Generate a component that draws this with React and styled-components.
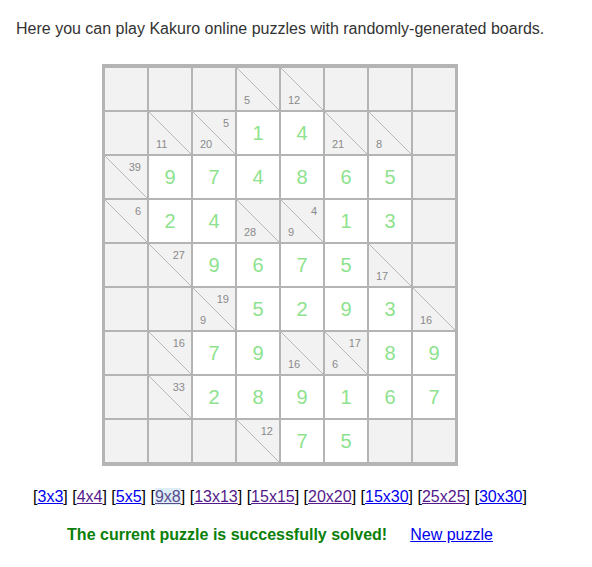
import styled, { createGlobalStyle } from 'styled-components';

const GlobalStyle = createGlobalStyle`
  body {
    margin: 8px;
    background: #fff;
    font-family: "Liberation Sans", Arial, sans-serif;
  }
`;

const Page = styled.div`
  width: 544px;
  padding: 0 8px;
  box-sizing: border-box;
`;

const Intro = styled.p`
  margin: 12px 0 0;
  font-size: 16px;
  line-height: 18px;
  color: #333;
  white-space: nowrap;
`;

const Board = styled.div`
  display: grid;
  grid-template-columns: repeat(8, 42px);
  grid-auto-rows: 42px;
  gap: 2px;
  padding: 4px 3px;
  width: fit-content;
  margin: 26px auto 0;
  background: #b4b4b4;
`;

const Block = styled.div`
  display: flex;
  flex-direction: column;
  justify-content: space-between;
  padding: 5px 6px 4px 7px;
  box-sizing: border-box;
  background: #f2f2f2;
  background-image: ${(p) =>
    p.$clue
      ? 'linear-gradient(to top right, transparent calc(50% - 0.6px), #b8b8b8 50%, transparent calc(50% + 0.6px))'
      : 'none'};
`;

const Clue = styled.span`
  font-size: 11px;
  line-height: 12px;
  color: #8a8a8a;
  align-self: ${(p) => (p.$across ? 'flex-end' : 'flex-start')};
  margin-top: ${(p) => (p.$alone ? 'auto' : '0')};
`;

const Value = styled.div`
  display: flex;
  align-items: center;
  justify-content: center;
  background: #fff;
  font-size: 20px;
  color: #8ee28e;
`;

const Sizes = styled.div`
  margin-top: 22px;
  text-align: center;
  font-size: 16px;
  line-height: 18px;
  color: #000;
`;

const SizeLink = styled.a`
  color: ${(p) => (p.$visited ? '#551a8b' : '#0000ee')};
  text-decoration: underline;
  background: ${(p) => (p.$current ? '#ddeef8' : 'transparent')};
  ${(p) => p.$current && 'color: #5b4a8c;'}
`;

const Status = styled.div`
  margin-top: 20px;
  display: flex;
  justify-content: center;
  align-items: baseline;
  gap: 23px;
  font-size: 16px;
  line-height: 18px;
`;

const Solved = styled.span`
  font-weight: bold;
  color: #0a800a;
`;

const NewLink = styled.a`
  color: #0000ee;
  text-decoration: underline;
`;

// null = plain block, [down, across] = clue block, number = filled cell
const B = null;
const grid = [
  [B, B, B, [5, 0], [12, 0], B, B, B],
  [B, [11, 0], [20, 5], 1, 4, [21, 0], [8, 0], B],
  [[0, 39], 9, 7, 4, 8, 6, 5, B],
  [[0, 6], 2, 4, [28, 0], [9, 4], 1, 3, B],
  [B, [0, 27], 9, 6, 7, 5, [17, 0], B],
  [B, B, [9, 19], 5, 2, 9, 3, [16, 0]],
  [B, [0, 16], 7, 9, [16, 0], [6, 17], 8, 9],
  [B, [0, 33], 2, 8, 9, 1, 6, 7],
  [B, B, B, [0, 12], 7, 5, B, B],
];

const sizes = [
  ['3x3', false],
  ['4x4', true],
  ['5x5', false],
  ['9x8', true, true],
  ['13x13', true],
  ['15x15', true],
  ['20x20', true],
  ['15x30', false],
  ['25x25', true],
  ['30x30', false],
];

function Cell({ v }) {
  if (v === null) return <Block />;
  if (Array.isArray(v)) {
    const [down, across] = v;
    return (
      <Block $clue>
        {across ? <Clue $across>{across}</Clue> : null}
        {down ? <Clue $alone={!across}>{down}</Clue> : null}
      </Block>
    );
  }
  return <Value>{v}</Value>;
}

export default function App() {
  return (
    <>
      <GlobalStyle />
      <Page>
        <Intro>Here you can play Kakuro online puzzles with randomly-generated boards.</Intro>
        <Board>
          {grid.map((row, r) => row.map((v, c) => <Cell key={r + '-' + c} v={v} />))}
        </Board>
        <Sizes>
          {sizes.map(([label, visited, current], i) => (
            <span key={label}>
              [<SizeLink href="#" $visited={visited} $current={current}>{label}</SizeLink>]
              {i < sizes.length - 1 ? ' ' : ''}
            </span>
          ))}
        </Sizes>
        <Status>
          <Solved>The current puzzle is successfully solved!</Solved>
          <NewLink href="#">New puzzle</NewLink>
        </Status>
      </Page>
    </>
  );
}
